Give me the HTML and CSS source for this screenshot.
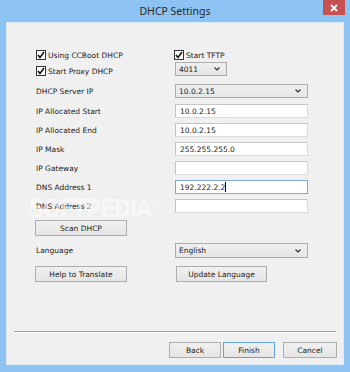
FILE: index.html
```html
<!DOCTYPE html>
<html>
<head>
<meta charset="utf-8">
<link rel="stylesheet" href="styles.css">
</head>
<body>
<div class="window">
  <div class="titlebar">
    <span class="title">DHCP Settings</span>
    <div class="close">
      <svg width="8" height="8" viewBox="0 0 8 8"><path d="M1 1L7 7M7 1L1 7" stroke="#fff" stroke-width="1.8"/></svg>
    </div>
  </div>
  <div class="client">
    <div class="form">
      <div class="row r1">
        <label class="check"><span class="box"><svg width="8" height="8" viewBox="0 0 8 8"><path d="M1 4L3 6.5L7 1" fill="none" stroke="#111" stroke-width="1.6"/></svg></span>Using CCBoot DHCP</label>
        <label class="check"><span class="box"><svg width="8" height="8" viewBox="0 0 8 8"><path d="M1 4L3 6.5L7 1" fill="none" stroke="#111" stroke-width="1.6"/></svg></span>Start TFTP</label>
      </div>
      <div class="row r2">
        <label class="check low"><span class="box"><svg width="8" height="8" viewBox="0 0 8 8"><path d="M1 4L3 6.5L7 1" fill="none" stroke="#111" stroke-width="1.6"/></svg></span>Start Proxy DHCP</label>
        <div class="select short"><span>4011</span><svg class="chev" width="6" height="4" viewBox="0 0 6 4"><path d="M0.5 0.5L3 3L5.5 0.5" fill="none" stroke="#333" stroke-width="1.2"/></svg></div>
      </div>
      <div class="row r3">
        <span class="lbl">DHCP Server IP</span>
        <div class="select"><span>10.0.2.15</span><svg class="chev" width="6" height="4" viewBox="0 0 6 4"><path d="M0.5 0.5L3 3L5.5 0.5" fill="none" stroke="#333" stroke-width="1.2"/></svg></div>
      </div>
      <div class="row r4">
        <span class="lbl">IP Allocated Start</span>
        <div class="input">10.0.2.15</div>
      </div>
      <div class="row">
        <span class="lbl">IP Allocated End</span>
        <div class="input">10.0.2.15</div>
      </div>
      <div class="row">
        <span class="lbl">IP Mask</span>
        <div class="input">255.255.255.0</div>
      </div>
      <div class="row">
        <span class="lbl">IP Gateway</span>
        <div class="input"></div>
      </div>
      <div class="row">
        <span class="lbl">DNS Address 1</span>
        <div class="input focus">192.222.2.2<span class="caret"></span></div>
      </div>
      <div class="row">
        <span class="lbl">DNS Address 2</span>
        <div class="input"></div>
      </div>
      <div class="row r-scan">
        <button class="btn wide">Scan DHCP</button>
      </div>
      <div class="row r-lang">
        <span class="lbl">Language</span>
        <div class="select"><span>English</span><svg class="chev" width="6" height="4" viewBox="0 0 6 4"><path d="M0.5 0.5L3 3L5.5 0.5" fill="none" stroke="#333" stroke-width="1.2"/></svg></div>
      </div>
      <div class="row r-btns">
        <button class="btn wide">Help to Translate</button>
        <button class="btn wide2">Update Language</button>
      </div>
    </div>
    <div class="footer">
      <div class="sep"></div>
      <div class="actions">
        <button class="btn nav">Back</button>
        <button class="btn nav default">Finish</button>
        <button class="btn nav cancel">Cancel</button>
      </div>
    </div>
    <div class="watermark">SOFTPEDIA<sup>®</sup></div>
  </div>
</div>
</body>
</html>
```

FILE: styles.css
```css
* { box-sizing: border-box; }
html, body { margin: 0; padding: 0; }
body {
  width: 350px;
  height: 372px;
  overflow: hidden;
  font-family: "DejaVu Sans", "Liberation Sans", sans-serif;
  font-size: 7.5px;
  color: #222;
}
.window {
  width: 350px;
  height: 372px;
  background: #8cc3f3;
  display: flex;
  flex-direction: column;
  position: relative;
}
.titlebar {
  height: 22px;
  display: flex;
  align-items: center;
  justify-content: center;
  flex: none;
}
.title {
  font-family: "Noto Sans", "Open Sans", sans-serif;
  font-size: 10.5px;
  color: #2a2a2a;
  margin-top: -1px;
}
.close {
  position: absolute;
  top: 0;
  right: 5px;
  width: 22px;
  height: 15px;
  background: #c75050;
  display: flex;
  align-items: center;
  justify-content: center;
}
.client {
  flex: 1;
  margin: 0 6px 7px 6px;
  background: #f0f0f0;
  border: 1px solid #dde9f4;
  position: relative;
  display: flex;
  flex-direction: column;
}
.form {
  padding: 25px 0 0 29px;
  display: flex;
  flex-direction: column;
  gap: 5px;
}
.row {
  display: grid;
  grid-template-columns: 139px 133px;
  height: 14px;
  align-items: center;
}
.r1 { margin-top: 0; }
.r2 { margin-top: -5px; }
.r3 { margin-top: 3px; }
.r4 { margin-top: 1px; }
.r-scan { margin-top: 2px; height: 16px; }
.r-lang { margin-top: 2px; height: 15px; }
.r-btns { margin-top: 3px; height: 16px; }
.lbl { white-space: nowrap; }
.check {
  display: flex;
  align-items: center;
  gap: 2px;
  white-space: nowrap;
}
.check.low { position: relative; top: 2px; }
.r1 .check:nth-child(2) { margin-left: -1px; }
.box {
  width: 10px;
  height: 10px;
  border: 1px solid #333;
  background: #fff;
  display: flex;
  align-items: center;
  justify-content: center;
}
.select {
  height: 14px;
  border: 1px solid #acacac;
  background: linear-gradient(#f0f0f0, #e5e5e5);
  display: flex;
  align-items: center;
  justify-content: space-between;
  padding: 0 6px 0 3px;
}
.r-lang .select { height: 15px; }
.select.short { width: 52px; }
.chev { display: block; }
.input {
  height: 14px;
  border: 1px solid #abadb3;
  border-color: #c5c5c5 #dcdcdc #dcdcdc #c5c5c5;
  background: #fff;
  padding: 0 4px;
  display: flex;
  align-items: center;
}
.input.focus { border-color: #7aa8d8; }
.caret {
  width: 1px;
  height: 10px;
  background: #000;
  margin-left: 0;
}
.btn {
  font-family: inherit;
  font-size: 7.5px;
  color: #222;
  height: 16px;
  border: 1px solid #adadad;
  background: linear-gradient(#f0f0f0, #e5e5e5);
  padding: 0;
  margin: 0;
}
.btn.wide { width: 92px; margin-left: -1px; }
.btn.wide2 { width: 91px; margin-left: 1px; }
.footer {
  margin-top: auto;
  padding: 0 6px 6px 6px;
}
.sep {
  height: 2px;
  margin: 0 1px;
  border-top: 1px solid #a0a0a0;
  border-bottom: 1px solid #fff;
}
.actions {
  display: flex;
  justify-content: flex-end;
  margin-top: 9px;
  gap: 2px;
}
.btn.nav { width: 52px; height: 16px; }
.btn.default { border-color: #62a2e4; }
.btn.cancel { width: 54px; margin-left: 6px; }
.watermark {
  position: absolute;
  left: 22px;
  top: 170px;
  font-family: "Liberation Sans", sans-serif;
  font-weight: bold;
  font-size: 26px;
  letter-spacing: -0.5px;
  color: rgba(255, 255, 255, 0.55);
  transform: scaleX(0.85);
  transform-origin: left top;
  pointer-events: none;
}
.watermark sup { font-size: 8px; vertical-align: 12px; }
```
